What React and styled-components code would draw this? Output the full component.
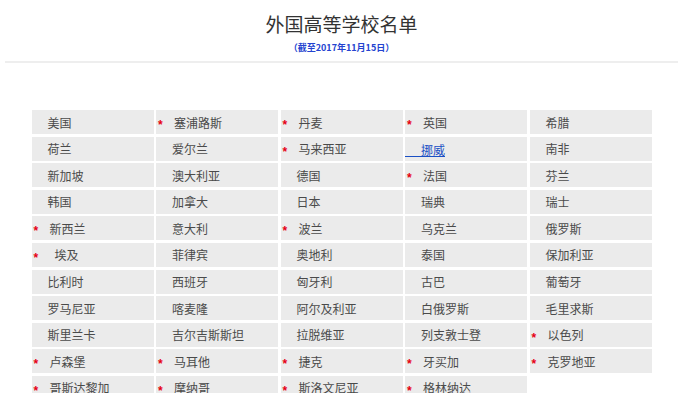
import styled, { createGlobalStyle } from "styled-components"

const GlobalStyle = createGlobalStyle`
    html, body {
        margin: 0;
        padding: 0;
        background: #FFFFFF;
    }

    body {
        font-family: "Noto Sans CJK SC", "Noto Sans", sans-serif;
        color: #333333;
    }
`

// s = 标记星号, extra = 文字额外缩进, link = 链接
const rows = [
    [{ n: "美国" }, { n: "塞浦路斯", s: true }, { n: "丹麦", s: true }, { n: "英国", s: true }, { n: "希腊" }],
    [{ n: "荷兰" }, { n: "爱尔兰" }, { n: "马来西亚", s: true }, { n: "挪威", link: true }, { n: "南非" }],
    [{ n: "新加坡" }, { n: "澳大利亚" }, { n: "德国" }, { n: "法国", s: true }, { n: "芬兰" }],
    [{ n: "韩国" }, { n: "加拿大" }, { n: "日本" }, { n: "瑞典" }, { n: "瑞士" }],
    [{ n: "新西兰", s: true }, { n: "意大利" }, { n: "波兰", s: true }, { n: "乌克兰" }, { n: "俄罗斯" }],
    [{ n: "埃及", s: true, extra: 5 }, { n: "菲律宾" }, { n: "奥地利" }, { n: "泰国" }, { n: "保加利亚" }],
    [{ n: "比利时" }, { n: "西班牙" }, { n: "匈牙利" }, { n: "古巴" }, { n: "葡萄牙" }],
    [{ n: "罗马尼亚" }, { n: "喀麦隆" }, { n: "阿尔及利亚" }, { n: "白俄罗斯" }, { n: "毛里求斯" }],
    [{ n: "斯里兰卡" }, { n: "吉尔吉斯斯坦" }, { n: "拉脱维亚" }, { n: "列支敦士登" }, { n: "以色列", s: true }],
    [{ n: "卢森堡", s: true }, { n: "马耳他", s: true }, { n: "捷克", s: true }, { n: "牙买加", s: true }, { n: "克罗地亚", s: true }],
    [{ n: "哥斯达黎加", s: true }, { n: "摩纳哥", s: true }, { n: "斯洛文尼亚", s: true }, { n: "格林纳达", s: true }, null],
]

export default function App() {
    return (
        <>
            <GlobalStyle />
            <Page>
                <Header>
                    <Titulo>外国高等学校名单</Titulo>
                    <SubTitulo>（截至2017年11月15日）</SubTitulo>
                </Header>
                <Divider />

                <Grid>
                    {rows.flat().map((c, i) => {
                        if (!c) return <Empty key={i} />
                        if (c.link) {
                            return (
                                <Cell key={i}>
                                    <CountryLink href="#">{c.n}</CountryLink>
                                </Cell>
                            )
                        }
                        return (
                            <Cell key={i} $star={c.s}>
                                {c.s && <Star>*</Star>}
                                <Name $extra={c.extra}>{c.n}</Name>
                            </Cell>
                        )
                    })}
                </Grid>
            </Page>
        </>
    )
}

const Page = styled.div`
    width: 673px;
    margin-left: 5px;
    display: flex;
    flex-direction: column;
    align-items: center;
`

const Header = styled.div`
    display: flex;
    flex-direction: column;
    align-items: center;
    padding-top: 12px;
`

const Titulo = styled.h1`
    margin: 0;
    font-size: 19px;
    line-height: 24px;
    font-weight: 400;
    color: #333333;
`

const SubTitulo = styled.p`
    margin: 5px 0 0;
    font-size: 9px;
    line-height: 14px;
    font-weight: 700;
    color: #2443d0;
`

const Divider = styled.div`
    width: 100%;
    height: 2px;
    margin-top: 6px;
    background: #EEEEEE;
`

const Grid = styled.div`
    display: grid;
    grid-template-columns: repeat(5, 122px);
    grid-auto-rows: 24px;
    column-gap: 2.5px;
    row-gap: 2.6px;
    margin-top: 47px;
`

const Cell = styled.div`
    display: flex;
    align-items: center;
    background: #EBEBEB;
    padding-left: ${p => p.$star ? 2 : 0}px;
    font-size: 12px;
    color: #4a4a4a;
    white-space: nowrap;
    overflow: hidden;
`

const Empty = styled.div`
    background: transparent;
`

const Star = styled.span`
    width: 15px;
    color: #E60012;
    font-family: "Liberation Sans", sans-serif;
    font-size: 12px;
    font-weight: 700;
    line-height: 12px;
    padding-top: 6px;
`

const Name = styled.span`
    padding-left: ${p => 16 + (p.$extra || 0)}px;
    ${Star} + & {
        padding-left: ${p => 1 + (p.$extra || 0)}px;
    }
`

const CountryLink = styled.a`
    display: inline-block;
    padding-left: 16px;
    color: #1a4fc4;
    text-decoration: none;
    border-bottom: 1px solid #1a4fc4;
    line-height: 13px;
    margin-top: 2px;
`
